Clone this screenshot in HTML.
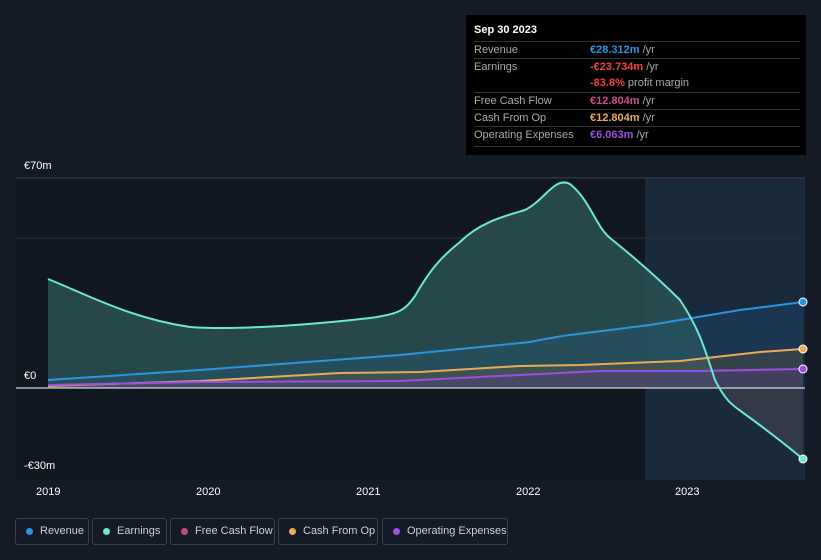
<!DOCTYPE html>
<html><head><meta charset="utf-8"><style>
html,body{margin:0;width:821px;height:560px;overflow:hidden}
body{background:#151b26;font-family:"Liberation Sans",sans-serif;position:relative}
.tt{position:absolute;left:466px;top:15px;width:340px;height:140px;background:#000;color:#ddd;font-size:11px}
.tt .h{position:absolute;left:8px;top:9px;font-weight:bold;color:#fff;font-size:11px}
.row{position:absolute;left:8px;width:326px;border-top:1px solid #333;height:17px;line-height:17px}
.row .l{position:absolute;left:0;color:#aaa}
.row .v{position:absolute;left:116px;color:#aaa}
.leg{position:absolute;top:518px;height:27px;border:1px solid #3a404c;border-radius:3px;color:#ccd;font-size:11px;line-height:25px;box-sizing:border-box;white-space:nowrap;overflow:hidden}
.leg i{position:absolute;left:10px;top:9px;width:7px;height:7px;border-radius:50%}
.leg span{position:absolute;left:24px}
.ax{position:absolute;color:#fff;font-size:11px}
</style></head><body>
<svg width="821" height="560" style="position:absolute;left:0;top:0">
<rect x="16" y="178" width="629" height="302" fill="#111720"/>
<rect x="645" y="178" width="160" height="302" fill="#182a3c"/>
<line x1="16" y1="178" x2="805" y2="178" stroke="#3a404a"/>
<line x1="16" y1="238" x2="805" y2="238" stroke="#2a303a"/>
<defs><clipPath id="a"><rect x="0" y="0" width="821" height="388"/></clipPath><clipPath id="b"><rect x="0" y="388" width="821" height="200"/></clipPath></defs>
<path d="M48,279 C90,296 130,318 190,327 C230,330 300,326 370,318 C400,314 405,310 415,296 C430,270 440,258 460,242 C480,222 505,216 525,210 C545,200 555,176 570,184 C590,200 595,225 610,238 C640,262 660,280 680,300 C700,330 705,350 715,380 C725,400 732,405 742,412 C760,425 780,440 803,459 L803,388 L48,388Z" fill="#2b5152" fill-opacity="0.85" clip-path="url(#a)"/>
<path d="M48,279 C90,296 130,318 190,327 C230,330 300,326 370,318 C400,314 405,310 415,296 C430,270 440,258 460,242 C480,222 505,216 525,210 C545,200 555,176 570,184 C590,200 595,225 610,238 C640,262 660,280 680,300 C700,330 705,350 715,380 C725,400 732,405 742,412 C760,425 780,440 803,459 L803,388 L48,388Z" fill="#3a3e4e" fill-opacity="0.8" clip-path="url(#b)"/>
<path d="M48,380 L200,370 L400,355 L530,342 C550,338 560,336 570,335 L650,325 L740,310 L803,302 L803,388 L48,388Z" fill="#1e5a8a" fill-opacity="0.25"/>
<path d="M48,386 L200,381 L340,373 L420,372 L520,366 L580,365 L680,361 L760,352 L803,349 L803,388 L48,388Z" fill="#6a5a40" fill-opacity="0.35"/>
<path d="M48,385 L200,382 L400,381 L520,375 L600,371 L700,371 L803,369 L803,388 L48,388Z" fill="#5a3a8a" fill-opacity="0.35"/>
<line x1="16" y1="388" x2="805" y2="388" stroke="#fff" stroke-width="1"/>
<path d="M48,380 L200,370 L400,355 L530,342 C550,338 560,336 570,335 L650,325 L740,310 L803,302" fill="none" stroke="#2b94e0" stroke-width="2"/>
<path d="M48,386 L200,381 L340,373 L420,372 L520,366 L580,365 L680,361 L760,352 L803,349" fill="none" stroke="#e8aa5c" stroke-width="2"/>
<path d="M48,385 L200,382 L400,381 L520,375 L600,371 L700,371 L803,369" fill="none" stroke="#9b4fe0" stroke-width="2"/>
<path d="M48,279 C90,296 130,318 190,327 C230,330 300,326 370,318 C400,314 405,310 415,296 C430,270 440,258 460,242 C480,222 505,216 525,210 C545,200 555,176 570,184 C590,200 595,225 610,238 C640,262 660,280 680,300 C700,330 705,350 715,380 C725,400 732,405 742,412 C760,425 780,440 803,459" fill="none" stroke="#6de6d2" stroke-width="2"/>
<circle cx="803" cy="302" r="4" fill="#2b94e0" stroke="#fff"/>
<circle cx="803" cy="349" r="4" fill="#e8aa5c" stroke="#fff"/>
<circle cx="803" cy="369" r="4" fill="#9b4fe0" stroke="#fff"/>
<circle cx="803" cy="459" r="4" fill="#6de6d2" stroke="#fff"/>
</svg>
<div class="ax" style="left:24px;top:160px">€70m</div>
<div class="ax" style="left:24px;top:370px">€0</div>
<div class="ax" style="left:24px;top:460px">-€30m</div>
<div class="ax" style="left:36px;top:486px">2019</div>
<div class="ax" style="left:196px;top:486px">2020</div>
<div class="ax" style="left:356px;top:486px">2021</div>
<div class="ax" style="left:516px;top:486px">2022</div>
<div class="ax" style="left:675px;top:486px">2023</div>
<div class="tt">
<div class="h">Sep 30 2023</div>
<div class="row" style="top:26px"><span class="l">Revenue</span><span class="v"><b style="color:#2b94e0">€28.312m</b> /yr</span></div>
<div class="row" style="top:43px"><span class="l">Earnings</span><span class="v"><b style="color:#f0413f">-€23.734m</b> /yr</span></div>
<div class="row" style="top:60px;border-top:none"><span class="v"><b style="color:#f0413f">-83.8%</b> profit margin</span></div>
<div class="row" style="top:77px"><span class="l">Free Cash Flow</span><span class="v"><b style="color:#d04a8a">€12.804m</b> /yr</span></div>
<div class="row" style="top:94px"><span class="l">Cash From Op</span><span class="v"><b style="color:#e8aa5c">€12.804m</b> /yr</span></div>
<div class="row" style="top:111px"><span class="l">Operating Expenses</span><span class="v"><b style="color:#9b4fe0">€6.063m</b> /yr</span></div>
<div class="row" style="top:131px;height:0"></div>
</div>
<div class="leg" style="left:15px;width:74px"><i style="background:#2b94e0"></i><span>Revenue</span></div>
<div class="leg" style="left:92px;width:75px"><i style="background:#6de6d2"></i><span>Earnings</span></div>
<div class="leg" style="left:170px;width:105px"><i style="background:#c04a80"></i><span>Free Cash Flow</span></div>
<div class="leg" style="left:278px;width:100px"><i style="background:#e8aa5c"></i><span>Cash From Op</span></div>
<div class="leg" style="left:382px;width:126px"><i style="background:#9b4fe0"></i><span>Operating Expenses</span></div>
</body></html>
